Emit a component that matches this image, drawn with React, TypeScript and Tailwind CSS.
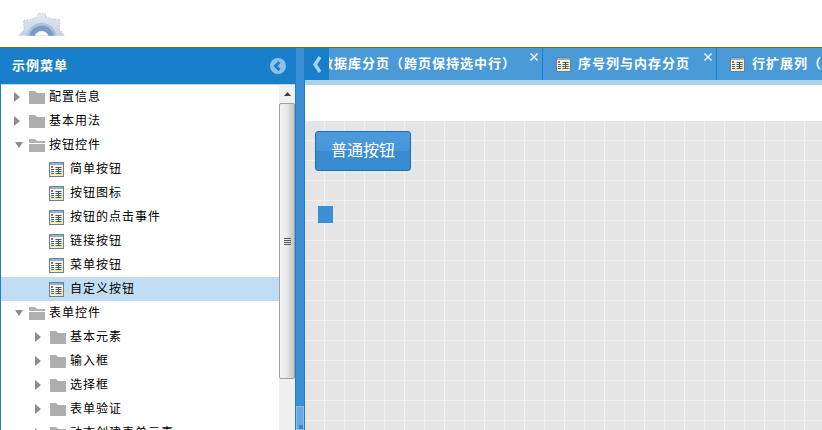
const FONT = "[font-family:'Liberation_Sans','Noto_Sans_CJK_SC',sans-serif]";

type Row = { label: string; level: 1 | 2; kind: "closed" | "open" | "leaf"; selected?: boolean };

const rows: Row[] = [
  { label: "配置信息", level: 1, kind: "closed" },
  { label: "基本用法", level: 1, kind: "closed" },
  { label: "按钮控件", level: 1, kind: "open" },
  { label: "简单按钮", level: 2, kind: "leaf" },
  { label: "按钮图标", level: 2, kind: "leaf" },
  { label: "按钮的点击事件", level: 2, kind: "leaf" },
  { label: "链接按钮", level: 2, kind: "leaf" },
  { label: "菜单按钮", level: 2, kind: "leaf" },
  { label: "自定义按钮", level: 2, kind: "leaf", selected: true },
  { label: "表单控件", level: 1, kind: "open" },
  { label: "基本元素", level: 2, kind: "closed" },
  { label: "输入框", level: 2, kind: "closed" },
  { label: "选择框", level: 2, kind: "closed" },
  { label: "表单验证", level: 2, kind: "closed" },
  { label: "动态创建表单元素", level: 2, kind: "closed" },
];

function GearLogo() {
  return (
    <svg width="60" height="40" viewBox="0 0 180 120">
      <defs>
        <clipPath id="gearClip">
          <rect x="0" y="0" width="180" height="92" />
        </clipPath>
        <linearGradient id="gearFill" x1="0" y1="0" x2="0" y2="1">
          <stop offset="0" stopColor="#e4eaf3" />
          <stop offset="1" stopColor="#c3d0e4" />
        </linearGradient>
      </defs>
      <g clipPath="url(#gearClip)">
        <path
          d="M26 92 L42 74 L40 46 L62 43 L80 36 L85 25 L105 25 L110 36 L130 43 L150 43 L148 74 L164 92 Z"
          fill="url(#gearFill)"
          stroke="#9fb2d2"
          strokeWidth="2"
          strokeDasharray="4 5"
        />
        <circle cx="95" cy="100" r="46" fill="#aebfdc" />
        <circle cx="95" cy="100" r="38" fill="#7d99c6" />
        <circle cx="95" cy="100" r="22" fill="#ffffff" />
      </g>
    </svg>
  );
}

function Folder({ open }: { open: boolean }) {
  return (
    <svg width="16" height="14" viewBox="0 0 16 14" className="shrink-0">
      {open ? (
        <path d="M0 1h6l2 2h8v2H0z M0 6h16v8H0z" fill="#b0b0b0" />
      ) : (
        <path d="M0 1h6l2 2h8v11H0z" fill="#aeaeae" />
      )}
    </svg>
  );
}

function PageIcon() {
  return (
    <svg width="15" height="15" viewBox="0 0 15 15" className="shrink-0">
      <defs>
        <linearGradient id="pageFill" x1="0" y1="0" x2="1" y2="1">
          <stop offset="0" stopColor="#ffffff" />
          <stop offset="1" stopColor="#f7e6a0" />
        </linearGradient>
      </defs>
      <rect x="0.5" y="0.5" width="14" height="14" fill="url(#pageFill)" stroke="#6b7f99" />
      <rect x="1" y="1" width="13" height="2" fill="#8fb0d8" />
      <rect x="2" y="4" width="2" height="2" fill="#d9534f" />
      <path d="M2 7.5h3M2 9.5h3M2 11.5h3M6.5 5.5h6M6.5 7.5h6M6.5 9.5h6M6.5 11.5h6M9.5 5v7" stroke="#3f5f8a" strokeWidth="1" fill="none" />
    </svg>
  );
}

function Arrow({ open }: { open: boolean }) {
  return open ? (
    <svg width="10" height="6" viewBox="0 0 10 6" className="shrink-0">
      <path d="M1 0h8L5 6z" fill="#8c8c8c" />
    </svg>
  ) : (
    <svg width="6" height="10" viewBox="0 0 6 10" className="shrink-0">
      <path d="M0 0l6 5-6 5z" fill="#8c8c8c" />
    </svg>
  );
}

function TreeRow({ row }: { row: Row }) {
  const pad = row.kind === "leaf" ? "pl-[48px]" : row.level === 1 ? "pl-[13px]" : "pl-[34px]";
  return (
    <div
      className={`flex h-[24px] shrink-0 items-center ${pad} ${row.selected ? "bg-[#c1ddf3]" : ""}`}
    >
      {row.kind !== "leaf" && (
        <span className="flex w-[15px] shrink-0 items-center justify-start">
          <Arrow open={row.kind === "open"} />
        </span>
      )}
      {row.kind === "leaf" ? <PageIcon /> : <Folder open={row.kind === "open"} />}
      <span className={`whitespace-nowrap text-[12px] tracking-[1px] text-black ${row.kind === "leaf" ? "ml-[6px]" : "ml-[4px]"}`}>
        {row.label}
      </span>
    </div>
  );
}

function ScrollBar() {
  return (
    <div className="flex h-full w-[16px] shrink-0 flex-col bg-[#f0f0f0]">
      <div className="flex h-[18px] shrink-0 items-center justify-center">
        <svg width="7" height="4" viewBox="0 0 7 4">
          <path d="M0 4l3.5-4L7 4z" fill="#404040" />
        </svg>
      </div>
      <div className="flex h-[276px] shrink-0 items-center justify-center rounded-[2px] border border-[#a0a0a0] bg-gradient-to-r from-[#f4f4f4] via-[#e8e8e8] to-[#c4c4c4]">
        <div className="flex flex-col gap-[1px]">
          <div className="h-px w-[7px] bg-[#555555]" />
          <div className="h-px w-[7px] bg-[#555555]" />
          <div className="h-px w-[7px] bg-[#555555]" />
          <div className="h-px w-[7px] bg-[#555555]" />
        </div>
      </div>
    </div>
  );
}

function Sidebar() {
  return (
    <div className="flex h-full w-[295px] shrink-0 flex-col border-l border-[#1b7fcb]">
      <div className="flex h-[36px] shrink-0 items-center justify-between bg-[#1a7fcb] pl-[11px] pr-[9px]">
        <span className="text-[13px] font-bold tracking-[1px] text-white">示例菜单</span>
        <svg width="16" height="16" viewBox="0 0 16 16">
          <circle cx="8" cy="8" r="8" fill="#8cc1ea" />
          <path d="M9.5 4L5.5 8l4 4" stroke="#1a7fcb" strokeWidth="3" fill="none" />
        </svg>
      </div>
      <div className="flex min-h-0 flex-1 border-t border-[#c8d6e2]">
        <div className="flex min-w-0 flex-1 flex-col overflow-hidden">
          {rows.map((r) => (
            <TreeRow key={r.label} row={r} />
          ))}
        </div>
        <ScrollBar />
      </div>
    </div>
  );
}

function Splitter() {
  return (
    <div className="flex h-full w-[10px] shrink-0 flex-col justify-end border-x border-[#1b7fcb] bg-[#3a8fd6]">
      <div className="relative h-[24px] border border-[#8cbfe9] bg-[#68a9e0]">
        <div className="absolute bottom-0 right-0 h-[4px] w-[4px] bg-[#3a80c0]" />
      </div>
    </div>
  );
}

function TabClose() {
  return (
    <svg width="8" height="8" viewBox="0 0 8 8" className="absolute right-[4px] top-[5px]">
      <path d="M0.5 0.5l7 7M7.5 0.5l-7 7" stroke="#ffffff" strokeWidth="1.4" />
    </svg>
  );
}

function Tab({ label, width, icon }: { label: string; width: string; icon: boolean }) {
  return (
    <div className={`relative flex h-full shrink-0 items-center border-r border-[#1b7fcb] bg-[#4a9ad8] pl-[13px] ${width}`}>
      {icon ? <PageIcon /> : <span className="h-[15px] w-[15px] shrink-0" />}
      <span className="ml-[7px] whitespace-nowrap text-[13px] font-bold tracking-[1px] text-white">{label}</span>
      <TabClose />
    </div>
  );
}

function TabBar() {
  return (
    <div className="flex h-[37px] shrink-0 flex-col">
      <div className="flex h-[32px] shrink-0">
        <div className="flex w-[24px] shrink-0 items-center justify-center bg-[#1a7fcb]">
          <svg width="10" height="17" viewBox="0 0 10 17">
            <path d="M8 1L3 8.5 8 16" stroke="#a8d2f2" strokeWidth="3.4" fill="none" />
          </svg>
        </div>
        <div className="flex min-w-0 flex-1 overflow-hidden">
          <div className="ml-[-44px] flex h-full">
            <Tab label="数据库分页（跨页保持选中行）" width="w-[258px]" icon={false} />
            <Tab label="序号列与内存分页" width="w-[174px]" icon />
            <Tab label="行扩展列（分页）" width="w-[174px]" icon />
          </div>
        </div>
      </div>
      <div className="h-[5px] shrink-0 bg-[#aed2ea]" />
    </div>
  );
}

function Content() {
  return (
    <div className="flex min-w-0 flex-1 flex-col">
      <TabBar />
      <div className="h-[36px] shrink-0 bg-white" />
      <div className="flex-1 bg-[#e5e5e5] bg-[linear-gradient(to_right,transparent_19px,#f1f1f1_19px),linear-gradient(to_bottom,transparent_19px,#f1f1f1_19px)] bg-[size:20px_20px] pl-[10px] pt-[10px]">
        <button className="flex h-[40px] w-[96px] items-center justify-center rounded-[3px] border border-[#1a70b8] bg-[linear-gradient(to_bottom,#4c9cdc_0%,#4795d8_50%,#3a8cd0_50%,#3a8cd0_100%)] text-[16px] tracking-[0px] text-white">
          普通按钮
        </button>
        <div className="ml-[3px] mt-[35px] h-[17px] w-[15px] bg-[#3a8fd6]" />
      </div>
    </div>
  );
}

export default function App() {
  return (
    <div className={`flex h-[430px] w-[822px] flex-col overflow-hidden bg-white ${FONT}`}>
      <div className="h-[48px] shrink-0 border-b border-[#5a7a1f] border-l-[#c8c8c8] pl-[10px] pt-[5px]">
        <GearLogo />
      </div>
      <div className="flex min-h-0 flex-1">
        <Sidebar />
        <Splitter />
        <Content />
      </div>
    </div>
  );
}
